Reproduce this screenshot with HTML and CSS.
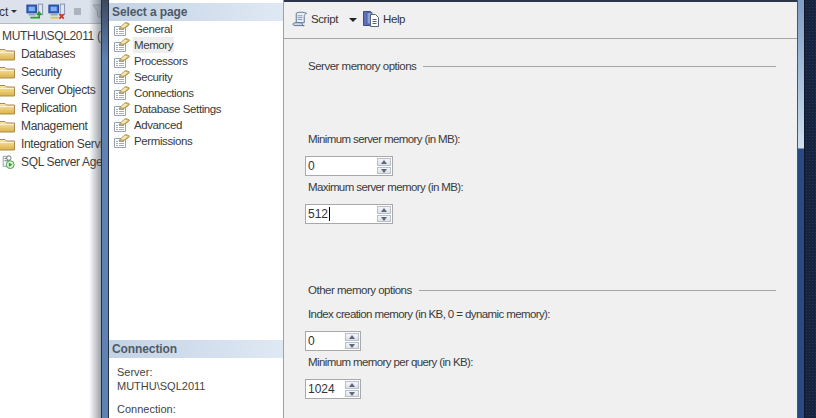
FILE: index.html
```html
<!DOCTYPE html>
<html lang="en">
<head>
<meta charset="utf-8">
<title>Server Properties - Memory</title>
<link rel="stylesheet" href="styles.css">
</head>
<body>
<svg class="defs" width="0" height="0" aria-hidden="true">
  <defs>
    <linearGradient id="fold" x1="0" y1="0" x2="0" y2="1"><stop offset="0" stop-color="#fbeaa6"/><stop offset="1" stop-color="#dcb14c"/></linearGradient>
    <symbol id="folder" viewBox="0 0 16 14">
      <path d="M-2 3.500V2.500h7l1.500 1.500H14.500V13H-2z" fill="url(#fold)" stroke="#a98c4c" stroke-width="1"/>
      <path d="M-2 5.500H14" stroke="#fff4c8" stroke-width="1"/>
    </symbol>
    <symbol id="page" viewBox="0 0 17 16">
      <path d="M1.500 5.500H12.500V14.500H1.500z" fill="#fff" stroke="#9aa3b2"/>
      <path d="M3 8.500H5M6 8.500H11M3 10.500H5M6 10.500H11M3 12.500H5M6 12.500H11" stroke="#a4adbe"/>
      <path d="M6 7.500L11 2.500L13 1.500L16.500 3L15 5L10 8z" fill="#d8bf6c" stroke="#8f7c42" stroke-width=".7"/>
      <path d="M8 6L12 2.500L14.500 3.500L11 6.500z" fill="#f6ebb8"/>
    </symbol>
  </defs>
</svg>

<aside class="explorer">
  <div class="ex-toolbar">
    <span class="ex-cut">ct</span>
    <span class="ex-caret"></span>
    <svg class="ex-icon" width="21" height="18" viewBox="0 0 24 20">
      <rect x="1" y="2" width="11" height="9" fill="#2f62c8" stroke="#23408a"/><rect x="3" y="4" width="7" height="5" fill="#7fb2ee"/>
      <rect x="3" y="12" width="8" height="2" fill="#8da3c8"/>
      <rect x="14" y="1" width="5" height="12" fill="#dfe5f0" stroke="#7d8ba5"/>
      <path d="M5 16.500H15M15 17.500V11M12.500 13.500L15 10.500L17.500 13.500" fill="none" stroke="#2c9a2e" stroke-width="2"/>
    </svg>
    <svg class="ex-icon" width="21" height="18" viewBox="0 0 24 20">
      <rect x="1" y="2" width="11" height="9" fill="#2f62c8" stroke="#23408a"/><rect x="3" y="4" width="7" height="5" fill="#7fb2ee"/>
      <rect x="3" y="12" width="8" height="2" fill="#8da3c8"/>
      <rect x="14" y="1" width="5" height="12" fill="#dfe5f0" stroke="#7d8ba5"/>
      <path d="M3 16.500H12" stroke="#e8c040" stroke-width="2"/>
      <path d="M13 12.500L18 17.500M18 12.500L13 17.500" stroke="#d2342a" stroke-width="2"/>
    </svg>
    <span class="ex-stop"></span>
    <svg class="ex-filter" width="14" height="18" viewBox="0 0 14 18"><path d="M1 2H13L8.500 8V15L5.500 13V8z" fill="#ccd2da" stroke="#aab2bc"/></svg>
  </div>
  <div class="tree">
    <div class="tree-root">MUTHU\SQL2011 (SQL Server 11.0)</div>
    <div class="tree-row"><svg class="ico-folder"><use href="#folder"/></svg>Databases</div>
    <div class="tree-row"><svg class="ico-folder"><use href="#folder"/></svg>Security</div>
    <div class="tree-row"><svg class="ico-folder"><use href="#folder"/></svg>Server Objects</div>
    <div class="tree-row"><svg class="ico-folder"><use href="#folder"/></svg>Replication</div>
    <div class="tree-row"><svg class="ico-folder"><use href="#folder"/></svg>Management</div>
    <div class="tree-row"><svg class="ico-folder"><use href="#folder"/></svg>Integration Services</div>
    <div class="tree-row">
      <svg class="ico-folder" viewBox="0 0 16 16"><path d="M2.500 1.500H9V13H2.500z" fill="#f2f4f8" stroke="#8a94a8"/><path d="M4 4H8M4 6.500H8" stroke="#6a7488"/><circle cx="9" cy="3.500" r="2.500" fill="#fff" stroke="#666"/><circle cx="10.500" cy="11" r="4.500" fill="#d8f0d0" stroke="#3c9a3c"/><path d="M9 8.500L13 11L9 13.500z" fill="#2c9a2e"/></svg>SQL Server Agent
    </div>
  </div>
  <div class="ex-shadow"></div>
</aside>

<div class="frame-left"></div>

<nav class="sidebar">
  <h2 class="side-head">Select a page</h2>
  <ul class="pages">
    <li class="page"><svg class="ico-page"><use href="#page"/></svg><span>General</span></li>
    <li class="page is-current"><svg class="ico-page"><use href="#page"/></svg><span>Memory</span></li>
    <li class="page"><svg class="ico-page"><use href="#page"/></svg><span>Processors</span></li>
    <li class="page"><svg class="ico-page"><use href="#page"/></svg><span>Security</span></li>
    <li class="page"><svg class="ico-page"><use href="#page"/></svg><span>Connections</span></li>
    <li class="page"><svg class="ico-page"><use href="#page"/></svg><span>Database Settings</span></li>
    <li class="page"><svg class="ico-page"><use href="#page"/></svg><span>Advanced</span></li>
    <li class="page"><svg class="ico-page"><use href="#page"/></svg><span>Permissions</span></li>
  </ul>
  <h2 class="side-head">Connection</h2>
  <div class="conn">
    <p>Server:<br>MUTHU\SQL2011</p>
    <p>Connection:<br>MUTHU\Hemadri</p>
  </div>
</nav>

<main class="content">
  <div class="toolbar">
    <button class="tool" type="button">
      <svg width="16" height="16" viewBox="0 0 17 17"><path d="M4.500 2.500C6 .8 13 1 15.500 2.500C14 3 13 4 13 6V12.500H4.500z" fill="#e8edf5" stroke="#5a6f90"/><path d="M1 13.500C2 12 10 12 11 13.500C11 15.500 12 16 13 15.500H3C1.500 15.500 1 14.500 1 13.500z" fill="#cdd8e8" stroke="#5a6f90"/><path d="M6 5H11M6 7H11M6 9H11" stroke="#8296b5"/></svg>
      <span>Script</span>
    </button>
    <span class="tool-caret"></span>
    <button class="tool" type="button">
      <svg width="17" height="17" viewBox="0 0 17 17"><path d="M.5 1.500H7.500V15.500H.5z" fill="#5a72b8" stroke="#3c4f8c"/><path d="M4 2.500H9V14H4z" fill="#8ea2d8" stroke="#4c60a0"/><path d="M7.500 4.500H12.500L15.500 7.500V16.500H7.500z" fill="#fff" stroke="#5a6478"/><path d="M9.500 9.500H13.500M9.500 11.500H13.500M9.500 13.500H13.500" stroke="#5a6478"/></svg>
      <span>Help</span>
    </button>
  </div>

  <section class="group group-server">
    <div class="group-title"><span>Server memory options</span><i class="rule"></i></div>
    <label class="field-label field-first">Minimum server memory (in MB):</label>
    <div class="spin"><span class="spin-val">0</span><span class="spin-btns"><b class="up"></b><b class="down"></b></span></div>
    <label class="field-label">Maximum server memory (in MB):</label>
    <div class="spin"><span class="spin-val">512<i class="cursor"></i></span><span class="spin-btns"><b class="up"></b><b class="down"></b></span></div>
  </section>

  <section class="group group-other">
    <div class="group-title"><span>Other memory options</span><i class="rule"></i></div>
    <label class="field-label field-index">Index creation memory (in KB, 0 = dynamic memory):</label>
    <div class="spin spin-small"><span class="spin-val">0</span><span class="spin-btns"><b class="up"></b><b class="down"></b></span></div>
    <label class="field-label">Minimum memory per query (in KB):</label>
    <div class="spin spin-small"><span class="spin-val">1024</span><span class="spin-btns"><b class="up"></b><b class="down"></b></span></div>
  </section>
</main>

<div class="frame-right"></div>
<div class="desktop"></div>
</body>
</html>
```

FILE: styles.css
```css
* { box-sizing: border-box; }
html, body { margin: 0; height: 100%; }
body {
  display: flex;
  width: 816px;
  height: 418px;
  overflow: hidden;
  font-family: "Liberation Sans", Arial, sans-serif;
  font-size: 11.5px;
  color: #3a3a3a;
  background: #fff;
}
.defs { position: absolute; }

/* Object Explorer behind the dialog */
.explorer { position: relative; width: 101px; flex: none; overflow: hidden; background: #fff; }
.ex-toolbar {
  display: flex; align-items: center; height: 24px;
  background: #dbe2ec; border-bottom: 1px solid #b4bcc8;
  white-space: nowrap; font-size: 12px; color: #333;
}
.ex-cut { margin-left: -1px; }
.ex-caret { width: 0; height: 0; margin: 0 0 0 3px; border: 3px solid transparent; border-top: 3px solid #333; border-bottom: 0; }
.ex-icon { flex: none; margin-left: 9px; }
.ex-icon + .ex-icon { margin-left: 1px; }
.ex-stop { flex: none; width: 7px; height: 7px; margin-left: 5px; background: #aeb4bd; }
.ex-filter { flex: none; margin-left: 11px; }
.tree { padding-top: 3px; font-size: 12px; letter-spacing: -.35px; color: #3d3d3d; white-space: nowrap; }
.tree-root { height: 18px; line-height: 18px; padding-left: 2px; }
.tree-row { display: flex; align-items: center; height: 18px; }
.ico-folder { width: 16px; height: 14px; margin: 0 5px 0 0; flex: none; }
.ex-shadow {
  position: absolute; top: 0; right: 0; bottom: 0; width: 12px;
  background: linear-gradient(to right, rgba(60,70,85,0), rgba(60,70,85,.5));
}

/* Dialog window frame */
.frame-left {
  width: 8px; flex: none;
  background: linear-gradient(#3c4a60, #5f81b4 60px, #5f81b4);
  border-left: 1px solid #27303e; border-right: 1px solid #27303e;
}
.frame-right {
  width: 7px; flex: none;
  background: linear-gradient(#7f9cc4, #9db8d8 60px, #cfe0ef 148px, #2a4a84 149px, #2a4a84);
  border-right: 1px solid #10182a;
}
.desktop {
  flex: 1;
  background-color: #16233f;
  background-image: radial-gradient(#26375a 1px, transparent 1px);
  background-size: 3px 3px;
}

/* Page selector */
.sidebar {
  width: 175px; flex: none; padding-top: 3px;
  background: #fff; border-right: 1px solid #a0a0a0;
}
.side-head {
  margin: 0; height: 18px; padding-left: 3px; line-height: 18px;
  font-size: 12px; font-weight: bold; letter-spacing: -.1px; color: #4e5a68;
  background: linear-gradient(to right, #c3d2e4, #dfe9f4);
}
.pages { list-style: none; margin: 0; padding: 0 0 0 4px; height: 319px; }
.page { display: flex; align-items: center; height: 16px; }
.ico-page { width: 17px; height: 16px; flex: none; margin-right: 3px; }
.page span { padding: 0 1px; line-height: 16px; letter-spacing: -.4px; }
.is-current span { background: #eeeeee; }
.conn { padding: 7px 0 0 8px; font-size: 11px; color: #444; line-height: 14px; }
.conn p { margin: 0 0 9px; }

/* Main pane */
.content {
  width: 514px; flex: none; padding-top: 2px;
  background: #f0f0f0;
  box-shadow: inset 0 2px 0 #2c3648; border-right: 1px solid #4a5668;
}
.toolbar {
  display: flex; align-items: center; height: 37px; padding: 0 0 3px 8px;
  border-bottom: 1px solid #a6a6a6;
}
.tool {
  display: flex; align-items: center; gap: 3px; padding: 0; border: 0; background: none;
  font: inherit; letter-spacing: -.4px; color: #333;
}
.tool-caret { width: 0; height: 0; margin: 2px 6px 0 11px; border: 4px solid transparent; border-top: 4px solid #222; border-bottom: 0; }
.group { padding: 0 21px; }
.group-server { padding-top: 20px; }
.group-other { padding-top: 59px; }
.group-title { display: flex; align-items: center; gap: 7px; height: 14px; padding-left: 3px; letter-spacing: -.5px; }
.rule { flex: 1; height: 1px; background: #a6a6a6; }
.field-label { display: block; height: 14px; line-height: 14px; margin: 4px 0 10px 3px; letter-spacing: -.6px; }
.field-first { margin-top: 59px; }
.field-index { margin-top: 10px; }
.spin {
  display: flex; align-items: center; justify-content: space-between;
  width: 88px; height: 20px; padding: 0 1px 0 2px;
  background: #fff; border: 1px solid #a9a9a9;
  font-size: 12px; color: #333;
}
.spin-small { width: 56px; }
.spin-val { display: flex; align-items: center; }
.cursor { width: 1px; height: 14px; margin-left: 1px; background: #000; }
.spin-btns { display: flex; flex-direction: column; gap: 1px; width: 14px; height: 16px; }
.spin-btns b {
  flex: 1; position: relative; display: block;
  background: linear-gradient(#f4f6f9, #dde2ea); border: 1px solid #b9c0ca;
}
.spin-btns b::after {
  content: ""; position: absolute; left: 3px; top: 1px; width: 0; height: 0;
  border: 3px solid transparent;
}
.up::after { border-top: 0 !important; border-bottom: 4px solid #5d6878 !important; }
.down::after { border-bottom: 0 !important; border-top: 4px solid #5d6878 !important; }
```
